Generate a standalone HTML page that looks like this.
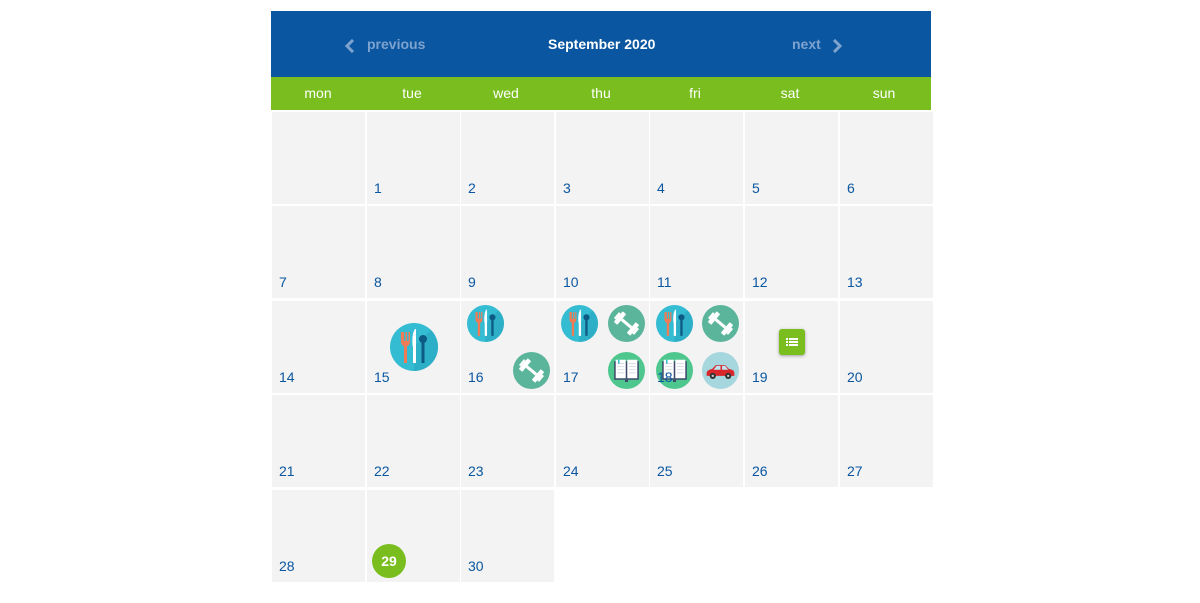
<!DOCTYPE html>
<html><head><meta charset="utf-8"><style>
*{margin:0;padding:0;box-sizing:border-box}
body{width:1200px;height:603px;background:#fff;position:relative;overflow:hidden;font-family:"Liberation Sans",sans-serif}
.hdr{position:absolute;left:271px;top:11px;width:660px;height:66px;background:#0a56a0}
.hdr span{position:absolute;top:25px;font-size:14px;font-weight:bold}
.days{position:absolute;left:271px;top:77px;width:660px;height:33px;background:#79bd1e}
.days span{position:absolute;top:8px;width:94px;text-align:center;color:#fff;font-size:14px}
.c{position:absolute;width:93px;height:92px;background:#f3f3f3}
.c b{position:absolute;left:7px;top:68px;font-weight:normal;font-size:14px;color:#0a56a0}
.i{position:absolute}
</style></head><body>
<svg width="0" height="0" style="position:absolute">
<defs>
<symbol id="food" viewBox="0 0 48 48">
<circle cx="24" cy="24" r="24" fill="#33bcd2"/>
<path d="M24 48A24 24 0 0 0 41 7L24 24Z" fill="#2aa6c0" opacity=".6"/>
<rect x="14" y="20" width="3" height="20" fill="#f07b55"/>
<path d="M11 9v10a4 4 0 0 0 9 0V9h-1.5v9h-1.5V9h-1.5v9h-1.5V9h-1.5v9H12.5V9z" fill="#f07b55"/>
<path d="M25 6c-3 4-3 14-2 18v16h3V6z" fill="#fff"/>
<circle cx="33" cy="16" r="4" fill="#0e5a86"/>
<rect x="31.5" y="18" width="3" height="22" fill="#0e5a86"/>
</symbol>
<symbol id="gym" viewBox="0 0 48 48">
<circle cx="24" cy="24" r="24" fill="#5bb59b"/>
<g transform="rotate(40 24 24)" fill="#fff">
<rect x="16" y="22" width="16" height="4"/>
<rect x="10" y="15" width="6" height="18" rx="1"/>
<rect x="32" y="15" width="6" height="18" rx="1"/>
<rect x="7" y="19" width="3" height="10"/>
<rect x="38" y="19" width="3" height="10"/>
</g>
</symbol>
<symbol id="book" viewBox="0 0 48 48">
<circle cx="24" cy="24" r="24" fill="#4ec78e"/>
<path d="M8 12h32v24H8z" fill="#3e4a6b"/>
<path d="M10 10h13v24H10zM25 10h13v24H25z" fill="#fff"/>
<path d="M12 15h9M12 19h9M12 23h9M12 27h9M27 15h9M27 19h9M27 23h9M27 27h9" stroke="#cfd6e4" stroke-width="1"/>
<rect x="13" y="10" width="2" height="5" fill="#33bcd2"/>
<rect x="22" y="36" width="4" height="3" fill="#3e4a6b"/>
</symbol>
<symbol id="car" viewBox="0 0 48 48">
<circle cx="24" cy="24" r="24" fill="#a6d6de"/>
<path d="M6 28c0-4 3-5 7-6l5-5h12l5 5c5 1 7 2 7 6v3H6z" fill="#d9262a"/>
<path d="M19 18h5v5h-9zM26 18h4l4 5h-8z" fill="#bfe4f0"/>
<circle cx="14" cy="31" r="4" fill="#333"/><circle cx="14" cy="31" r="1.5" fill="#ccc"/>
<circle cx="34" cy="31" r="4" fill="#333"/><circle cx="34" cy="31" r="1.5" fill="#ccc"/>
</symbol>
</defs></svg>

<div class="hdr">
<svg style="position:absolute;left:74px;top:28px" width="10" height="14" viewBox="0 0 10 14"><path d="M8 1L2 7l6 6" stroke="#7fa3cf" stroke-width="3" fill="none"/></svg>
<span style="left:96px;color:#7fa3cf">previous</span>
<span style="left:277px;color:#fff">September 2020</span>
<span style="left:521px;color:#7fa3cf">next</span>
<svg style="position:absolute;left:561px;top:28px" width="10" height="14" viewBox="0 0 10 14"><path d="M2 1l6 6-6 6" stroke="#7fa3cf" stroke-width="3" fill="none"/></svg>
</div>
<div class="days">
<span style="left:0">mon</span><span style="left:94px">tue</span><span style="left:188px">wed</span><span style="left:283px">thu</span><span style="left:377px">fri</span><span style="left:472px">sat</span><span style="left:566px">sun</span>
</div>

<div class="c" style="left:272px;top:112px"></div>
<div class="c" style="left:367px;top:112px"><b>1</b></div>
<div class="c" style="left:461px;top:112px"><b>2</b></div>
<div class="c" style="left:556px;top:112px"><b>3</b></div>
<div class="c" style="left:650px;top:112px"><b>4</b></div>
<div class="c" style="left:745px;top:112px"><b>5</b></div>
<div class="c" style="left:840px;top:112px"><b>6</b></div>

<div class="c" style="left:272px;top:206px"><b>7</b></div>
<div class="c" style="left:367px;top:206px"><b>8</b></div>
<div class="c" style="left:461px;top:206px"><b>9</b></div>
<div class="c" style="left:556px;top:206px"><b>10</b></div>
<div class="c" style="left:650px;top:206px"><b>11</b></div>
<div class="c" style="left:745px;top:206px"><b>12</b></div>
<div class="c" style="left:840px;top:206px"><b>13</b></div>

<div class="c" style="left:272px;top:301px"><b>14</b></div>
<div class="c" style="left:367px;top:301px"><b>15</b></div>
<div class="c" style="left:461px;top:301px"><b>16</b></div>
<div class="c" style="left:556px;top:301px"><b>17</b></div>
<div class="c" style="left:650px;top:301px"></div>
<div class="c" style="left:745px;top:301px"><b>19</b></div>
<div class="c" style="left:840px;top:301px"><b>20</b></div>

<div class="c" style="left:272px;top:395px"><b>21</b></div>
<div class="c" style="left:367px;top:395px"><b>22</b></div>
<div class="c" style="left:461px;top:395px"><b>23</b></div>
<div class="c" style="left:556px;top:395px"><b>24</b></div>
<div class="c" style="left:650px;top:395px"><b>25</b></div>
<div class="c" style="left:745px;top:395px"><b>26</b></div>
<div class="c" style="left:840px;top:395px"><b>27</b></div>

<div class="c" style="left:272px;top:490px"><b>28</b></div>
<div class="c" style="left:367px;top:490px"><div style="position:absolute;left:5px;top:54px;width:34px;height:34px;border-radius:50%;background:#79bd1e;color:#fff;font-size:14px;font-weight:bold;text-align:center;line-height:34px">29</div></div>
<div class="c" style="left:461px;top:490px"><b>30</b></div>

<svg class="i" style="left:390px;top:323px" width="48" height="48"><use href="#food"/></svg>
<svg class="i" style="left:467px;top:305px" width="37" height="37"><use href="#food"/></svg>
<svg class="i" style="left:513px;top:352px" width="37" height="37"><use href="#gym"/></svg>
<svg class="i" style="left:561px;top:305px" width="37" height="37"><use href="#food"/></svg>
<svg class="i" style="left:608px;top:305px" width="37" height="37"><use href="#gym"/></svg>
<svg class="i" style="left:608px;top:352px" width="37" height="37"><use href="#book"/></svg>
<svg class="i" style="left:656px;top:305px" width="37" height="37"><use href="#food"/></svg>
<svg class="i" style="left:702px;top:305px" width="37" height="37"><use href="#gym"/></svg>
<svg class="i" style="left:656px;top:352px" width="37" height="37"><use href="#book"/></svg>
<svg class="i" style="left:702px;top:352px" width="37" height="37"><use href="#car"/></svg>
<div style="position:absolute;left:657px;top:369px;font-size:14px;color:#0a56a0">18</div>

<div style="position:absolute;left:779px;top:329px;width:26px;height:26px;background:#79bd1e;border-radius:3px;box-shadow:0 1px 3px rgba(0,0,0,.35)">
<svg width="26" height="26" viewBox="0 0 26 26"><g fill="#fff"><rect x="7" y="9" width="2" height="2"/><rect x="10" y="9" width="9" height="2"/><rect x="7" y="12" width="2" height="2"/><rect x="10" y="12" width="9" height="2"/><rect x="7" y="15" width="2" height="2"/><rect x="10" y="15" width="9" height="2"/></g></svg>
</div>
</body></html>
